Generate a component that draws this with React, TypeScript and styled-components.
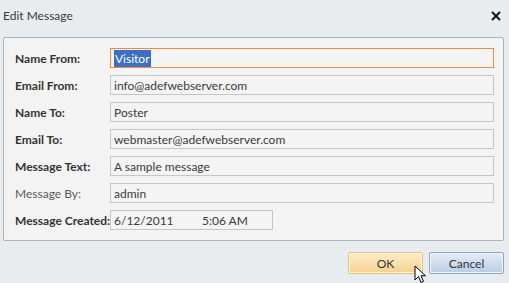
import styled, { createGlobalStyle } from "styled-components";

const Global = createGlobalStyle`
  html, body {
    margin: 0;
    padding: 0;
    background: #e9ecef;
  }
  body {
    font-family: Lato, "Open Sans", Arial, sans-serif;
    font-size: 12px;
    color: #333;
  }
`;

const Dialog = styled.div`
  position: relative;
  width: 509px;
  height: 283px;
  box-sizing: border-box;
  background: #e9ecef;
  display: flex;
  flex-direction: column;
  overflow: hidden;
`;

const TitleBar = styled.div`
  height: 37px;
  display: flex;
  align-items: center;
  justify-content: space-between;
  padding: 0 8px 6px 3px;
  box-sizing: border-box;
`;

const Title = styled.span`
  font-size: 12px;
  color: #3a3a3a;
`;

const Close = styled.svg`
  width: 10px;
  height: 10px;
`;

const Panel = styled.div`
  margin: 0 5px 0 3px;
  border: 1px solid #aab2bc;
  border-radius: 2px;
  background: #f3f3f3;
  padding: 10px 9px 10px 11px;
  display: flex;
  flex-direction: column;
  gap: 7px;
`;

const Row = styled.div`
  display: flex;
  align-items: center;
  height: 20px;
`;

const Label = styled.label<{ $plain?: boolean }>`
  width: 95px;
  flex: none;
  white-space: nowrap;
  font-weight: ${({ $plain }) => ($plain ? 400 : 700)};
  color: ${({ $plain }) => ($plain ? "#5a5a5a" : "#333")};
`;

const Field = styled.div<{ $focus?: boolean; $width?: string }>`
  flex: ${({ $width }) => ($width ? "none" : "1")};
  width: ${({ $width }) => $width || "auto"};
  height: 20px;
  box-sizing: border-box;
  border: 1px solid ${({ $focus }) => ($focus ? "#f08a3c" : "#c6c6c6")};
  background: #f4f4f4;
  display: flex;
  align-items: center;
  padding-left: 3px;
  color: #3a3a3a;
  white-space: nowrap;
`;

const Selected = styled.span`
  background: #3a6fc4;
  color: #fff;
  padding: 1px 1px;
`;

const DatePart = styled.span`
  width: 88px;
`;

const Footer = styled.div`
  display: flex;
  justify-content: flex-end;
  gap: 6px;
  padding: 11px 5px 0 0;
`;

const Button = styled.button<{ $hot?: boolean }>`
  width: 75px;
  height: 22px;
  font-family: inherit;
  font-size: 12px;
  color: #333;
  border-radius: 2px;
  border: 1px solid ${({ $hot }) => ($hot ? "#eac07e" : "#8fa6c4")};
  background: ${({ $hot }) =>
    $hot
      ? "linear-gradient(#fdebc8 0%, #fae0ae 50%, #f6d08e 100%)"
      : "linear-gradient(#e6eef8 0%, #cfdcee 50%, #b9cce6 100%)"};
  box-shadow: inset 0 0 0 1px ${({ $hot }) => ($hot ? "#fff4de" : "#eef3fa")};
  padding: 0;
`;

const Cursor = styled.svg`
  position: absolute;
  left: 414px;
  top: 265px;
  width: 13px;
  height: 20px;
`;

const rows = [
  { label: "Name From:", value: "Visitor", focus: true },
  { label: "Email From:", value: "info@adefwebserver.com" },
  { label: "Name To:", value: "Poster" },
  { label: "Email To:", value: "webmaster@adefwebserver.com" },
  { label: "Message Text:", value: "A sample message" },
  { label: "Message By:", value: "admin", plain: true },
];

export default function App() {
  return (
    <Dialog>
      <Global />
      <TitleBar>
        <Title>Edit Message</Title>
        <Close viewBox="0 0 10 10">
          <path d="M1 1 L9 9 M9 1 L1 9" stroke="#111" strokeWidth="2" />
        </Close>
      </TitleBar>
      <Panel>
        {rows.map((r) => (
          <Row key={r.label}>
            <Label $plain={r.plain}>{r.label}</Label>
            <Field $focus={r.focus}>
              {r.focus ? <Selected>{r.value}</Selected> : r.value}
            </Field>
          </Row>
        ))}
        <Row>
          <Label>Message Created:</Label>
          <Field $width="163px">
            <DatePart>6/12/2011</DatePart>
            <span>5:06 AM</span>
          </Field>
        </Row>
      </Panel>
      <Footer>
        <Button $hot>OK</Button>
        <Button>Cancel</Button>
      </Footer>
      <Cursor viewBox="0 0 13 20">
        <path
          d="M1 1 L1 15 L4.5 11.5 L7 17.5 L9.5 16.5 L7 10.8 L11.5 10.8 Z"
          fill="#fff"
          stroke="#000"
          strokeWidth="1"
          strokeLinejoin="round"
        />
      </Cursor>
    </Dialog>
  );
}
